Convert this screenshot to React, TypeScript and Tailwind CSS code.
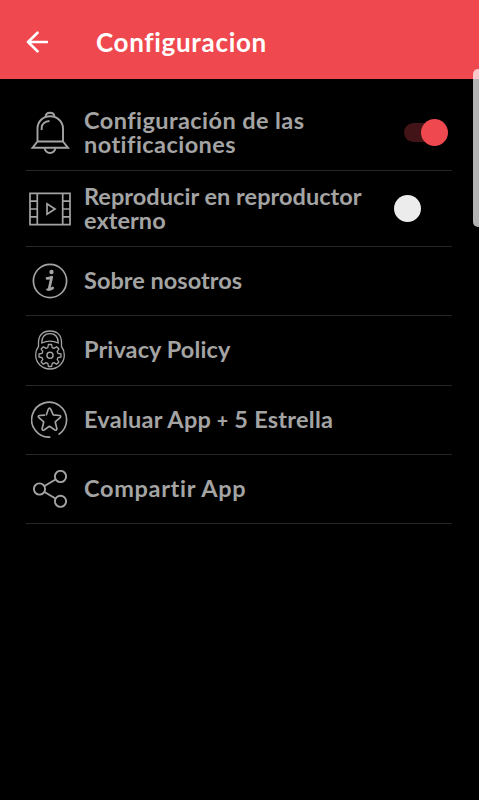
import type { ReactNode } from "react";

const line = "block whitespace-nowrap";

function BellIcon() {
  return (
    <svg className="h-[44px] w-[40px]" viewBox="0 0 40 44" fill="none" stroke="currentColor" strokeWidth="1.9">
      <path d="M7.500 30.500V17.500C7.500 10.500 13 5.200 20 5.200S33 10.500 33 17.500V30.500L38 36.800H2.500L7.500 30.500H33" />
      <path d="M15.500 6C15.700 3 17.500 1.800 20 1.800S24.300 3 24.500 6" />
      <path d="M14.500 37.300C15.500 40.700 17.500 42 20 42S24.500 40.700 25.500 37.300" />
      <path d="M11.700 19V16.500C12 13 15 10.300 19.500 10" />
    </svg>
  );
}

function FilmIcon() {
  return (
    <svg className="h-[34px] w-[42px]" viewBox="0 0 42 34" fill="none" stroke="currentColor" strokeWidth="1.700">
      <path d="M1 1.300H41V32.700H1ZM8.300 1.300V32.700M33.700 1.300V32.700M1 9.200H8.300M1 17H8.300M1 24.800H8.300M33.700 9.200H41M33.700 17H41M33.700 24.800H41" />
      <path d="M18 11.800V22.200L26 17Z" />
    </svg>
  );
}

function InfoIcon() {
  return (
    <svg className="h-[36px] w-[36px]" viewBox="0 0 36 36" fill="none" stroke="currentColor">
      <circle cx="18" cy="18" r="16.600" strokeWidth="1.700" />
      <circle cx="19.500" cy="9" r="2.200" fill="currentColor" stroke="none" />
      <path d="M15 15.400C17 15.600 18.500 14.800 19.700 14.200L17 26.400C18.500 26.700 19.700 25.900 20.700 25" strokeWidth="2.700" strokeLinecap="round" strokeLinejoin="round" />
      <path d="M15.300 26.600H17" strokeWidth="2.300" strokeLinecap="round" />
    </svg>
  );
}

function LockIcon() {
  return (
    <svg className="h-[40px] w-[30px]" viewBox="0 0 30 40" fill="none" stroke="currentColor" strokeWidth="1.300">
      <path d="M3.500 16.500V12.500C3.500 5 8 1 15 1S26.500 5 26.500 12.500V16.500C28.500 19 29.300 21.800 29.300 25C29.300 33 23 39 15 39S.700 33 .700 25C.700 21.800 1.500 19 3.500 16.500Z" />
      <path d="M6.800 13C6.800 7 10 3.700 15 3.700S23.200 7 23.200 13C18 10.500 12 10.500 6.800 13Z" />
      <path d="M13.400 14.500H16.600L17.200 17.600L19 18.400L21.600 16.700L23.900 19L22.200 21.600L23 23.400L26 24V27L23 27.600L22.200 29.400L23.900 32L21.600 34.300L19 32.600L17.200 33.400L16.600 36.500H13.400L12.800 33.400L11 32.600L8.400 34.300L6.100 32L7.800 29.400L7 27.600L4 27V24L7 23.400L7.800 21.600L6.100 19L8.400 16.700L11 18.400L12.800 17.600Z" strokeLinejoin="round" />
      <circle cx="15" cy="25.300" r="3.100" strokeWidth="1.400" />
    </svg>
  );
}

function StarIcon() {
  return (
    <svg className="h-[37px] w-[37px]" viewBox="0 0 36 36" fill="none" stroke="currentColor" strokeWidth="1.600" strokeLinecap="round" strokeLinejoin="round">
      <path d="M18.200 35.200A17 17 0 1 1 27.300 32.200" />
      <path d="M15 13.300L16.700 8.200Q18 5.800 19.300 8.200L21.600 13.500L27.900 14.100Q29.700 14.700 28.300 16.200L23.600 20.400L25.200 27Q25.100 29 23.300 28.200L18 24.600L12.700 28.200Q10.900 29 10.800 27L12.400 20.400L7.700 16.200Q6.300 14.700 8.100 14.100L13 13.800" />
    </svg>
  );
}

function ShareIcon() {
  return (
    <svg className="h-[38px] w-[34px]" viewBox="0 0 34 38" fill="none" stroke="currentColor" strokeWidth="1.900">
      <circle cx="6.500" cy="19" r="5.600" />
      <circle cx="27.500" cy="6.500" r="5.600" />
      <circle cx="27.500" cy="31.300" r="5.600" />
      <path d="M11.500 16L22.500 9.500M11.500 22L22.500 28.500" />
    </svg>
  );
}

function Row({ icon, children, toggle, tall = false }: { icon: ReactNode; children: ReactNode; toggle?: ReactNode; tall?: boolean }) {
  return (
    <li className={`flex items-center border-b-[1.5px] border-[#262626] ${tall ? "h-[76px]" : "h-[69.250px]"}`}>
      <span className="flex w-[47px] shrink-0 justify-center">{icon}</span>
      <span className="ml-[11px] grow pb-[2px] text-[23.500px] leading-[24px] font-bold">{children}</span>
      {toggle}
    </li>
  );
}

export default function App() {
  return (
    <main className="relative h-[800px] w-[479px] overflow-hidden bg-black font-['Lato',sans-serif] text-[#a4a4a4]">
      <header className="flex h-[79px] items-center bg-[#ef484e] pt-1 pl-[26px] text-white">
        <svg className="h-[22px] w-[22px]" viewBox="0 0 22 22" fill="none" stroke="currentColor" strokeWidth="2.600" strokeLinecap="round" strokeLinejoin="round">
          <path d="M21 11H2M11.500 1.700L2 11L11.500 20.300" />
        </svg>
        <h1 className="ml-[48px] text-[26px] leading-8 font-bold whitespace-nowrap"><span className="tracking-[0.680px]">Configuracion</span></h1>
      </header>
      <ul className="mr-[27px] ml-[26px] pt-4">
        <Row tall icon={<BellIcon />} toggle={
          <span className="mr-1 flex h-[27px] w-[44px] items-center">
            <span className="h-[19px] w-[30px] rounded-full bg-[#421418]" />
            <span className="-ml-[13px] h-[27px] w-[27px] shrink-0 rounded-full bg-[#ef484e]" />
          </span>
        }>
          <span className={`${line} tracking-[0.430px]`}>Configuración de las</span>
          <span className={`${line} tracking-[0.450px]`}>notificaciones</span>
        </Row>
        <Row tall icon={<FilmIcon />} toggle={<span className="mr-[31px] h-[27px] w-[27px] shrink-0 rounded-full bg-[#ececec]" />}>
          <span className={`${line} tracking-[0.040px]`}>Reproducir en reproductor</span>
          <span className={`${line} tracking-[0.050px]`}>externo</span>
        </Row>
        <Row icon={<InfoIcon />}><span className={`${line} tracking-[0.030px]`}>Sobre nosotros</span></Row>
        <Row icon={<LockIcon />}><span className={`${line} tracking-[0.100px]`}>Privacy Policy</span></Row>
        <Row icon={<StarIcon />}><span className={`${line} tracking-[0.250px]`}>Evaluar App <span className="text-[19px] leading-none font-black">+</span> 5 Estrella</span></Row>
        <Row icon={<ShareIcon />}><span className={`${line} tracking-[0.680px]`}>Compartir App</span></Row>
      </ul>
      <div className="absolute top-[69px] right-0 h-[158px] w-[6px] rounded-l-[5px] bg-white/70" />
    </main>
  );
}
